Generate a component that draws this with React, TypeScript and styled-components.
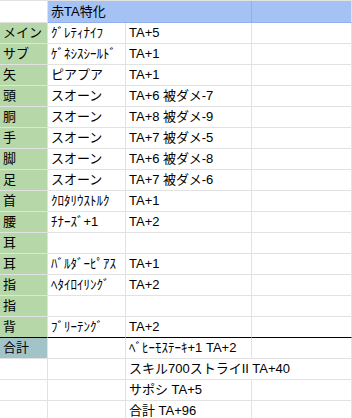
import React from "react";
import styled, { createGlobalStyle } from "styled-components";

const GlobalStyle = createGlobalStyle`
  html, body {
    margin: 0;
    padding: 0;
    background: #ffffff;
  }
  body {
    font-family: "Liberation Sans", "Noto Sans CJK JP", sans-serif;
  }
`;

const GRID = "#e2e2e2";
const GREEN = "#b6d7a8";
const BLUE = "#a4c2f4";
const BLUE_LINE = "#8fb0ea";
const TEAL = "#a2c4c9";

const Sheet = styled.div`
  display: grid;
  grid-template-columns: 48px 78px 126px 1fr;
  grid-template-rows: 22px;
  grid-auto-rows: 21px;
  border-top: 1px solid ${GRID};
  width: 352px;
  overflow: hidden;
`;

type CellProps = {
  $bg?: string;
  $right?: string;
  $bottom?: string;
  $span?: number;
};

const Cell = styled.div<CellProps>`
  box-sizing: border-box;
  display: flex;
  align-items: flex-end;
  padding: 0 3px 2px 3px;
  background: ${(p) => p.$bg ?? "transparent"};
  border-right: 1px solid ${(p) => p.$right ?? GRID};
  border-bottom: 1px solid ${(p) => p.$bottom ?? GRID};
  grid-column: ${(p) => (p.$span ? `span ${p.$span}` : "auto")};
  font-size: 13px;
  line-height: 16px;
  color: #000000;
  white-space: nowrap;
  overflow: visible;
  min-width: 0;
`;

const Text = styled.span`
  position: relative;
  z-index: 1;
`;

type Row = { slot: string; item: string; effect: string };

const rows: Row[] = [
  { slot: "メイン", item: "ｸﾞﾚﾃｨﾅｲﾌ", effect: "TA+5" },
  { slot: "サブ", item: "ｹﾞﾈｼｽｼｰﾙﾄﾞ", effect: "TA+1" },
  { slot: "矢", item: "ピアプア", effect: "TA+1" },
  { slot: "頭", item: "スオーン", effect: "TA+6 被ダメ-7" },
  { slot: "胴", item: "スオーン", effect: "TA+8 被ダメ-9" },
  { slot: "手", item: "スオーン", effect: "TA+7 被ダメ-5" },
  { slot: "脚", item: "スオーン", effect: "TA+6 被ダメ-8" },
  { slot: "足", item: "スオーン", effect: "TA+7 被ダメ-6" },
  { slot: "首", item: "ｸﾛﾀﾘｳｽﾄﾙｸ", effect: "TA+1" },
  { slot: "腰", item: "ﾁﾅｰｽﾞ+1", effect: "TA+2" },
  { slot: "耳", item: "", effect: "" },
  { slot: "耳", item: "ﾊﾞﾙﾀﾞｰﾋﾟｱｽ", effect: "TA+1" },
  { slot: "指", item: "ﾍﾀｲﾛｲﾘﾝｸﾞ", effect: "TA+2" },
  { slot: "指", item: "", effect: "" },
  { slot: "背", item: "ﾌﾞﾘｰﾃﾝｸﾞ", effect: "TA+2" },
];

type TotalRow = { label: string; text: string; overflow?: boolean };

const totals: TotalRow[] = [
  { label: "合計", text: "ﾍﾞﾋｰﾓｽﾃｰｷ+1 TA+2" },
  { label: "", text: "スキル700ストライII TA+40", overflow: true },
  { label: "", text: "サポシ TA+5" },
  { label: "", text: "合計 TA+96" },
];

export default function App() {
  return (
    <>
      <GlobalStyle />
      <Sheet>
        <Cell />
        <Cell $bg={BLUE} $span={2} $right={BLUE_LINE} $bottom={BLUE_LINE}>
          <Text>赤TA特化</Text>
        </Cell>
        <Cell $bg={BLUE} $bottom={BLUE_LINE} />

        {rows.map((r, i) => {
          const last = i === rows.length - 1;
          const bottom = last ? "#000000" : undefined;
          return (
            <React.Fragment key={i}>
              <Cell $bg={GREEN} $bottom={bottom}>
                <Text>{r.slot}</Text>
              </Cell>
              <Cell $bottom={bottom}>
                <Text>{r.item}</Text>
              </Cell>
              <Cell $bottom={bottom}>
                <Text>{r.effect}</Text>
              </Cell>
              <Cell $bottom={bottom} />
            </React.Fragment>
          );
        })}

        {totals.map((t, i) => (
          <React.Fragment key={`t${i}`}>
            <Cell $bg={t.label ? TEAL : undefined}>
              <Text>{t.label}</Text>
            </Cell>
            <Cell />
            <Cell $right={t.overflow ? "transparent" : undefined}>
              <Text>{t.text}</Text>
            </Cell>
            <Cell />
          </React.Fragment>
        ))}
      </Sheet>
    </>
  );
}
